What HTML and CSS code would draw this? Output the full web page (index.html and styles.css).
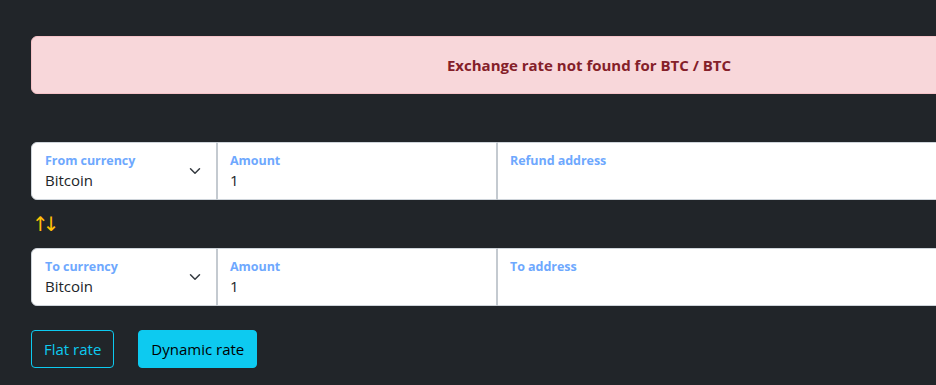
FILE: index.html
```html
<!DOCTYPE html>
<html>
<head>
<meta charset="utf-8">
<link rel="stylesheet" href="styles.css">
</head>
<body>
<div class="page">
  <div class="alert">Exchange rate not found for BTC / BTC</div>
  <div class="group">
    <div class="field select">
      <div class="label">From currency</div>
      <div class="value">Bitcoin</div>
      <svg class="chev" viewBox="0 0 16 16" width="16" height="12"><path d="m2 5 6 6 6-6" fill="none" stroke="#343a40" stroke-width="2" stroke-linecap="round" stroke-linejoin="round"/></svg>
    </div>
    <div class="field amount">
      <div class="label">Amount</div>
      <div class="value">1</div>
    </div>
    <div class="field addr">
      <div class="label">Refund address</div>
      <div class="value"></div>
    </div>
  </div>
  <div class="swap">↑↓</div>
  <div class="group">
    <div class="field select">
      <div class="label">To currency</div>
      <div class="value">Bitcoin</div>
      <svg class="chev" viewBox="0 0 16 16" width="16" height="12"><path d="m2 5 6 6 6-6" fill="none" stroke="#343a40" stroke-width="2" stroke-linecap="round" stroke-linejoin="round"/></svg>
    </div>
    <div class="field amount">
      <div class="label">Amount</div>
      <div class="value">1</div>
    </div>
    <div class="field addr">
      <div class="label">To address</div>
      <div class="value"></div>
    </div>
  </div>
  <div class="buttons">
    <button class="btn outline">Flat rate</button>
    <button class="btn filled">Dynamic rate</button>
  </div>
</div>
</body>
</html>
```

FILE: styles.css
```css
html, body {
  margin: 0;
  background: #212529;
  overflow: hidden;
}
body {
  font-family: "Open Sans", "Noto Sans", sans-serif;
  color: #212529;
}
.page {
  width: 1116px;
  padding: 36px 0 0 31px;
}
.alert {
  background: #f8d7da;
  border: 1px solid #f5c2c7;
  border-radius: 6px;
  color: #842029;
  font-weight: 700;
  font-size: 15px;
  line-height: 24px;
  padding: 16px;
  text-align: center;
  margin-bottom: 48px;
}
.group {
  display: flex;
  height: 58px;
}
.field {
  position: relative;
  background: #fff;
  border: 1px solid #ced4da;
  box-sizing: border-box;
  height: 58px;
  padding: 9px 13px 0;
}
.field + .field {
  margin-left: -1px;
  border-left: 2px solid #c4cad0;
  padding-left: 12px;
}
.field:first-child { border-radius: 6px 0 0 6px; }
.field:last-child { border-radius: 0 6px 6px 0; }
.select { width: 186px; }
.amount { width: 281px; }
.addr { flex: 1; }
.label {
  color: #6ea8fe;
  font-size: 12.5px;
  font-weight: 700;
  line-height: 17px;
  letter-spacing: -0.05px;
}
.value {
  font-size: 15px;
  line-height: 22px;
  color: #212529;
}
.chev {
  position: absolute;
  right: 13px;
  top: 22px;
}
.swap {
  height: 48px;
  line-height: 48px;
  color: #ffc107;
  font-size: 20px;
  font-weight: 400;
  padding-left: 1px;
  font-family: "DejaVu Sans", sans-serif;
  letter-spacing: -6px;
}
.buttons {
  display: flex;
  gap: 24px;
  margin-top: 24px;
}
.btn {
  font-family: inherit;
  font-size: 15px;
  height: 38px;
  padding: 0 12px;
  border-radius: 4px;
  border: 1px solid #0dcaf0;
  cursor: pointer;
}
.outline {
  background: transparent;
  color: #0dcaf0;
}
.filled {
  background: #0dcaf0;
  color: #000;
}
```
